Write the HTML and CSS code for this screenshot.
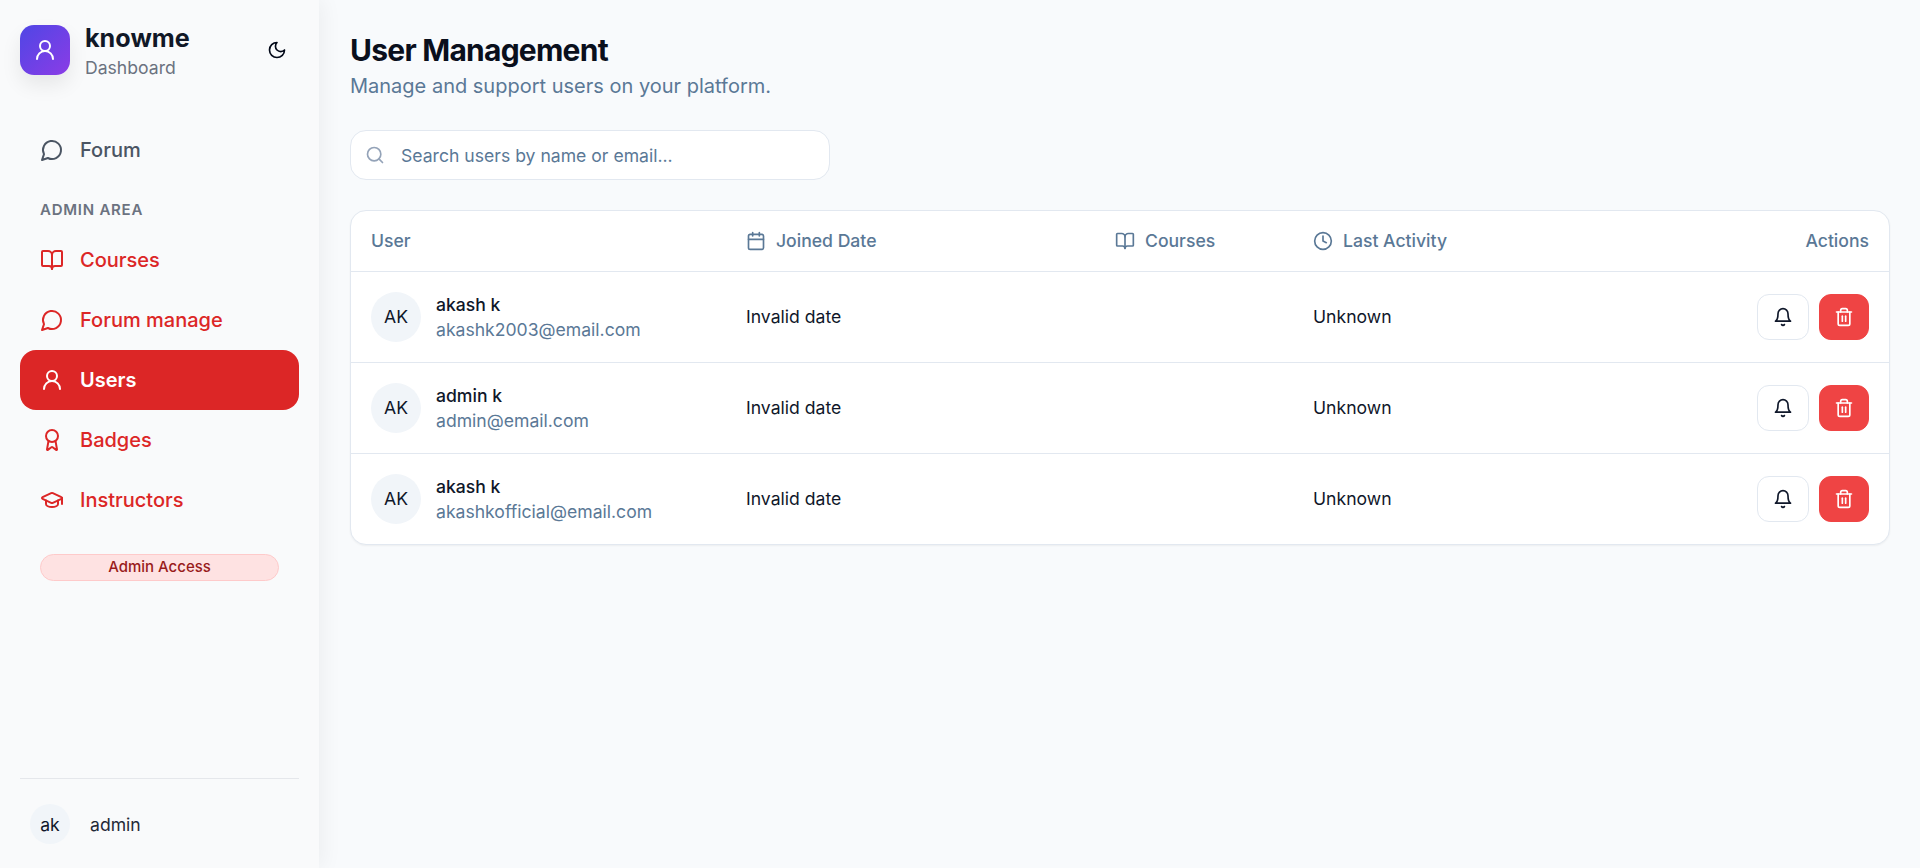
FILE: index.html
```html
<!DOCTYPE html>
<html lang="en">
<head>
<meta charset="utf-8">
<title>User Management</title>
<link rel="stylesheet" href="styles.css">
</head>
<body>
<svg class="defs" width="0" height="0" aria-hidden="true">
  <symbol id="i-user" viewBox="0 0 24 24"><circle cx="12" cy="8" r="5"/><path d="M20 21a8 8 0 0 0-16 0"/></symbol>
  <symbol id="i-chat" viewBox="0 0 24 24"><path d="M7.9 20A9 9 0 1 0 4 16.1L2 22Z"/></symbol>
  <symbol id="i-book" viewBox="0 0 24 24"><path d="M12 7v14"/><path d="M3 18a1 1 0 0 1-1-1V4a1 1 0 0 1 1-1h5a4 4 0 0 1 4 4 4 4 0 0 1 4-4h5a1 1 0 0 1 1 1v13a1 1 0 0 1-1 1h-6a3 3 0 0 0-3 3 3 3 0 0 0-3-3z"/></symbol>
  <symbol id="i-award" viewBox="0 0 24 24"><path d="m15.477 12.89 1.515 8.526a.5.5 0 0 1-.81.47l-3.58-2.687a1 1 0 0 0-1.197 0l-3.586 2.686a.5.5 0 0 1-.81-.469l1.514-8.526"/><circle cx="12" cy="8" r="6"/></symbol>
  <symbol id="i-cap" viewBox="0 0 24 24"><path d="M21.42 10.922a1 1 0 0 0-.019-1.838L12.83 5.18a2 2 0 0 0-1.66 0L2.6 9.08a1 1 0 0 0 0 1.832l8.57 3.908a2 2 0 0 0 1.66 0z"/><path d="M22 10v6"/><path d="M6 12.5V16a6 3 0 0 0 12 0v-3.5"/></symbol>
  <symbol id="i-moon" viewBox="0 0 24 24"><path d="M12 3a6 6 0 0 0 9 9 9 9 0 1 1-9-9Z"/></symbol>
  <symbol id="i-search" viewBox="0 0 24 24"><circle cx="11" cy="11" r="8"/><path d="m21 21-4.3-4.3"/></symbol>
  <symbol id="i-cal" viewBox="0 0 24 24"><path d="M8 2v4"/><path d="M16 2v4"/><rect width="18" height="18" x="3" y="4" rx="2"/><path d="M3 10h18"/></symbol>
  <symbol id="i-clock" viewBox="0 0 24 24"><circle cx="12" cy="12" r="10"/><polyline points="12 6 12 12 16 14"/></symbol>
  <symbol id="i-bell" viewBox="0 0 24 24"><path d="M6 8a6 6 0 0 1 12 0c0 7 3 9 3 9H3s3-2 3-9"/><path d="M10.3 21a1.94 1.94 0 0 0 3.4 0"/></symbol>
  <symbol id="i-trash" viewBox="0 0 24 24"><path d="M3 6h18"/><path d="M19 6v14c0 1-1 2-2 2H7c-1 0-2-1-2-2V6"/><path d="M8 6V4c0-1 1-2 2-2h4c1 0 2 1 2 2v2"/><line x1="10" x2="10" y1="11" y2="17"/><line x1="14" x2="14" y1="11" y2="17"/></symbol>
</svg>
<div class="app">
  <aside class="sidebar">
    <div class="brand">
      <div class="logo"><svg class="icon icon-24"><use href="#i-user"/></svg></div>
      <div class="brand-text">
        <div class="brand-name">knowme</div>
        <div class="brand-sub">Dashboard</div>
      </div>
      <button class="theme" type="button" aria-label="Toggle theme"><svg class="icon icon-20"><use href="#i-moon"/></svg></button>
    </div>
    <nav class="nav">
      <a class="nav-item" href="#"><svg class="icon icon-24"><use href="#i-chat"/></svg><span>Forum</span></a>
      <div class="nav-label">ADMIN AREA</div>
      <a class="nav-item admin" href="#"><svg class="icon icon-24"><use href="#i-book"/></svg><span>Courses</span></a>
      <a class="nav-item admin" href="#"><svg class="icon icon-24"><use href="#i-chat"/></svg><span>Forum manage</span></a>
      <a class="nav-item active" href="#"><svg class="icon icon-24"><use href="#i-user"/></svg><span>Users</span></a>
      <a class="nav-item admin" href="#"><svg class="icon icon-24"><use href="#i-award"/></svg><span>Badges</span></a>
      <a class="nav-item admin" href="#"><svg class="icon icon-24"><use href="#i-cap"/></svg><span>Instructors</span></a>
      <div class="access">Admin Access</div>
    </nav>
    <div class="profile">
      <div class="profile-row">
        <div class="avatar-sm">ak</div>
        <span class="profile-name">admin</span>
      </div>
    </div>
  </aside>
  <main class="main">
    <h1 class="title">User Management</h1>
    <p class="subtitle">Manage and support users on your platform.</p>
    <label class="search">
      <svg class="icon icon-20"><use href="#i-search"/></svg>
      <input class="search-input" type="text" placeholder="Search users by name or email...">
    </label>
    <div class="card">
      <table class="table">
        <colgroup><col class="c-user"><col class="c-date"><col class="c-courses"><col class="c-activity"><col class="c-actions"></colgroup>
        <thead>
          <tr>
            <th>User</th>
            <th><span class="th-inner"><svg class="icon icon-20"><use href="#i-cal"/></svg>Joined Date</span></th>
            <th><span class="th-inner"><svg class="icon icon-20"><use href="#i-book"/></svg>Courses</span></th>
            <th><span class="th-inner"><svg class="icon icon-20"><use href="#i-clock"/></svg>Last Activity</span></th>
            <th class="right">Actions</th>
          </tr>
        </thead>
        <tbody>
          <tr>
            <td><div class="user"><div class="avatar">AK</div><div><div class="user-name">akash k</div><div class="user-mail">akashk2003@email.com</div></div></div></td>
            <td>Invalid date</td><td></td><td>Unknown</td>
            <td><div class="actions"><button class="btn" type="button" aria-label="Notify"><svg class="icon icon-20"><use href="#i-bell"/></svg></button><button class="btn danger" type="button" aria-label="Delete"><svg class="icon icon-20"><use href="#i-trash"/></svg></button></div></td>
          </tr>
          <tr>
            <td><div class="user"><div class="avatar">AK</div><div><div class="user-name">admin k</div><div class="user-mail">admin@email.com</div></div></div></td>
            <td>Invalid date</td><td></td><td>Unknown</td>
            <td><div class="actions"><button class="btn" type="button" aria-label="Notify"><svg class="icon icon-20"><use href="#i-bell"/></svg></button><button class="btn danger" type="button" aria-label="Delete"><svg class="icon icon-20"><use href="#i-trash"/></svg></button></div></td>
          </tr>
          <tr>
            <td><div class="user"><div class="avatar">AK</div><div><div class="user-name">akash k</div><div class="user-mail">akashkofficial@email.com</div></div></div></td>
            <td>Invalid date</td><td></td><td>Unknown</td>
            <td><div class="actions"><button class="btn" type="button" aria-label="Notify"><svg class="icon icon-20"><use href="#i-bell"/></svg></button><button class="btn danger" type="button" aria-label="Delete"><svg class="icon icon-20"><use href="#i-trash"/></svg></button></div></td>
          </tr>
        </tbody>
      </table>
    </div>
  </main>
</div>
</body>
</html>
```
FILE: styles.css
```css
* { box-sizing: border-box; }
html, body { margin: 0; height: 100%; }
body {
  font-family: Inter, "Liberation Sans", sans-serif;
  background: #f8fafc;
  color: #0f172a;
  overflow: hidden;
}
.defs { position: absolute; }
.icon {
  fill: none;
  stroke: currentColor;
  stroke-width: 2;
  stroke-linecap: round;
  stroke-linejoin: round;
  flex: none;
}
.icon-20 { width: 20px; height: 20px; }
.icon-24 { width: 24px; height: 24px; }

.app { display: flex; height: 868px; }

.sidebar {
  position: relative;
  z-index: 1;
  width: 319px;
  flex: none;
  display: flex;
  flex-direction: column;
  padding: 25px 20px 0;
  background: #f9fafb;
  box-shadow: 4px 0 20px rgba(0, 0, 0, 0.05);
}
.brand { display: flex; align-items: center; height: 50px; }
.logo {
  width: 50px;
  height: 50px;
  border-radius: 14px;
  background: linear-gradient(135deg, #4f46e5, #8b3ce6);
  box-shadow: 0 10px 20px rgba(0, 0, 0, 0.08);
  color: #fff;
  display: flex;
  align-items: center;
  justify-content: center;
  flex: none;
}
.brand-text { margin-left: 15px; padding-top: 3px; flex: 1; }
.brand-name { font-size: 25.2px; line-height: 32px; font-weight: 700; color: #111827; }
.brand-sub { font-size: 17.6px; line-height: 27px; color: #6b7280; }
.theme {
  width: 40px;
  height: 40px;
  margin-right: 2px;
  padding: 0;
  border: 0;
  background: transparent;
  color: #020817;
  display: flex;
  align-items: center;
  justify-content: center;
}

.nav { flex: 1; padding-top: 45px; display: flex; flex-direction: column; }
.nav-item {
  height: 60px;
  flex: none;
  padding: 0 20px;
  display: flex;
  align-items: center;
  gap: 16px;
  border-radius: 16px;
  font-size: 20px;
  font-weight: 500;
  color: #4b5563;
  text-decoration: none;
}
.nav-item.admin { color: #dc2626; }
.nav-item.active { background: #dc2626; color: #fff; font-weight: 600; }
.nav-label {
  height: 50px;
  padding: 20px 20px 0;
  font-size: 15px;
  line-height: 20px;
  font-weight: 600;
  letter-spacing: 0.75px;
  color: #6b7280;
}
.access {
  margin: 24px 20px 0;
  height: 27px;
  border: 1px solid #fecaca;
  border-radius: 14px;
  background: #fee2e2;
  color: #991b1b;
  font-size: 15px;
  line-height: 23px;
  font-weight: 500;
  text-align: center;
}

.profile { border-top: 1px solid #e5e7eb; height: 90px; padding: 25px 10px 0; }
.profile-row { display: flex; align-items: center; gap: 20px; }
.avatar-sm {
  width: 40px;
  height: 40px;
  border-radius: 50%;
  background: #f1f5f9;
  display: flex;
  align-items: center;
  justify-content: center;
  font-size: 17.6px;
  flex: none;
}
.profile-name { font-size: 17.6px; color: #1f2937; }

.main { flex: 1; min-width: 0; padding: 30px 30px 0 31px; background: #f8fafc; }
.title {
  margin: 0;
  font-size: 30px;
  line-height: 40px;
  font-weight: 700;
  letter-spacing: -0.75px;
  color: #0a0f1c;
}
.subtitle { margin: 0; font-size: 20px; line-height: 32px; color: #5a7896; }

.search {
  margin-top: 28px;
  width: 480px;
  height: 50px;
  padding: 0 14px;
  display: flex;
  align-items: center;
  gap: 16px;
  background: #fff;
  border: 1px solid #e2e8f0;
  border-radius: 16px;
  color: #94a3b8;
}
.search-input {
  flex: 1;
  min-width: 0;
  border: 0;
  outline: 0;
  padding: 0;
  background: transparent;
  font: 400 17.6px Inter, "Liberation Sans", sans-serif;
  color: #0f172a;
}
.search-input::placeholder { color: #5a7896; opacity: 1; }

.card {
  margin-top: 30px;
  background: #fff;
  border: 1px solid #e2e8f0;
  border-radius: 16px;
  box-shadow: 0 1px 2px rgba(0, 0, 0, 0.05);
  overflow: hidden;
}
.table { width: 100%; border-collapse: collapse; table-layout: fixed; font-size: 17.6px; }
.c-user { width: 375px; }
.c-date { width: 369px; }
.c-courses { width: 198px; }
.table th {
  height: 60px;
  padding: 0 20px;
  text-align: left;
  font-weight: 500;
  color: #5a7896;
  border-bottom: 1px solid #e2e8f0;
}
.table th.right { text-align: right; }
.th-inner { display: flex; align-items: center; gap: 10px; }
.table td { height: 91px; padding: 0 20px; border-bottom: 1px solid #e2e8f0; }
.table tbody tr:last-child td { border-bottom: 0; }

.user { display: flex; align-items: center; gap: 15px; }
.avatar {
  width: 50px;
  height: 50px;
  border-radius: 50%;
  background: #f1f5f9;
  display: flex;
  align-items: center;
  justify-content: center;
  font-size: 17.6px;
  flex: none;
}
.user-name { font-size: 17.6px; line-height: 25px; font-weight: 450; }
.user-mail { font-size: 17.6px; line-height: 25px; color: #5a7896; }

.actions { display: flex; justify-content: flex-end; gap: 10px; }
.btn {
  width: 52px;
  height: 46px;
  padding: 0;
  border: 1px solid #e2e8f0;
  border-radius: 12px;
  background: #fff;
  color: #0f172a;
  display: flex;
  align-items: center;
  justify-content: center;
}
.btn.danger { width: 50px; background: #ef4444; border-color: #ef4444; color: #fff; }
```
